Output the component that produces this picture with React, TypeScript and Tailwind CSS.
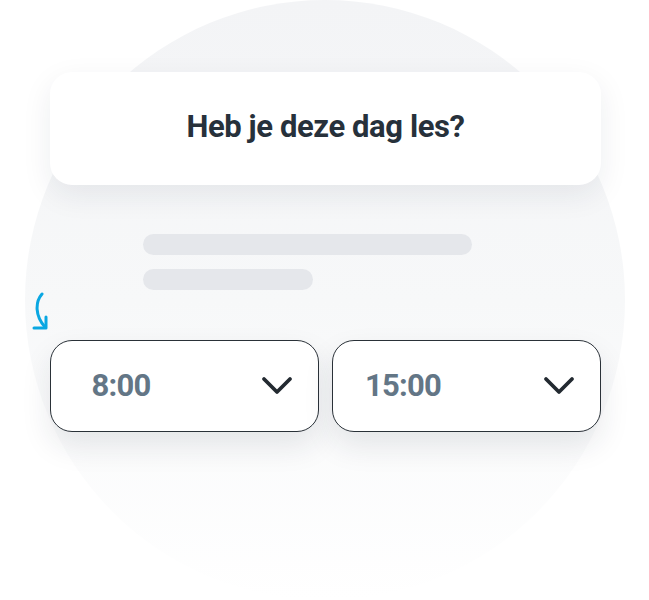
import React from "react";

function Chevron() {
  return (
    <svg width="32" height="20" viewBox="0 0 32 20" fill="none">
      <path d="M3 3 L16 16 L29 3" stroke="#232a31" strokeWidth="3.8" strokeLinecap="round" strokeLinejoin="round" />
    </svg>
  );
}

function TimeSelect({ value }: { value: string }) {
  return (
    <div className="flex h-[92px] flex-1 items-center justify-between rounded-[22px] border-[1.8px] border-[#2a3138] bg-white pr-[25px] shadow-[0_14px_30px_rgba(30,40,60,0.10)]">
      <span className="w-[140px] text-center text-[31px] font-bold tracking-[-0.8px] text-[#637686]">
        {value}
      </span>
      <Chevron />
    </div>
  );
}

export default function App() {
  return (
    <div className="relative h-[600px] w-[649px] overflow-hidden bg-white" style={{ fontFamily: "Roboto, 'Liberation Sans', sans-serif" }}>
      <div className="absolute left-[25px] top-0 h-[600px] w-[600px] rounded-full bg-gradient-to-b from-[#f3f4f6] via-[#f7f8f9] to-white" />
      <div className="relative flex flex-col pl-[50px] pr-[48px] pt-[72px]">
        <div className="flex h-[113px] items-center justify-center rounded-[22px] bg-white shadow-[0_10px_30px_rgba(30,40,60,0.08)]">
          <span className="pb-[2px] text-[31px] font-bold tracking-[-0.4px] text-[#27313b]">Heb je deze dag les?</span>
        </div>
        <div className="mt-[49px] flex flex-col gap-[14px] pl-[93px]">
          <div className="h-[21px] w-[329px] rounded-full bg-[#e5e7eb]" />
          <div className="h-[21px] w-[170px] rounded-full bg-[#e5e7eb]" />
        </div>
        <div className="ml-[-20px] flex h-[50px] items-start pt-[2px]">
          <svg width="24" height="40" viewBox="0 0 24 40" fill="none">
            <path d="M12 2 C5 10 5 24 15 35" stroke="#0aa7e2" strokeWidth="3" strokeLinecap="round" fill="none" />
            <path d="M16 25 L16 36 L4 36" stroke="#0aa7e2" strokeWidth="3" strokeLinecap="round" strokeLinejoin="round" fill="none" />
          </svg>
        </div>
        <div className="flex gap-[13px]">
          <TimeSelect value="8:00" />
          <TimeSelect value="15:00" />
        </div>
      </div>
    </div>
  );
}
